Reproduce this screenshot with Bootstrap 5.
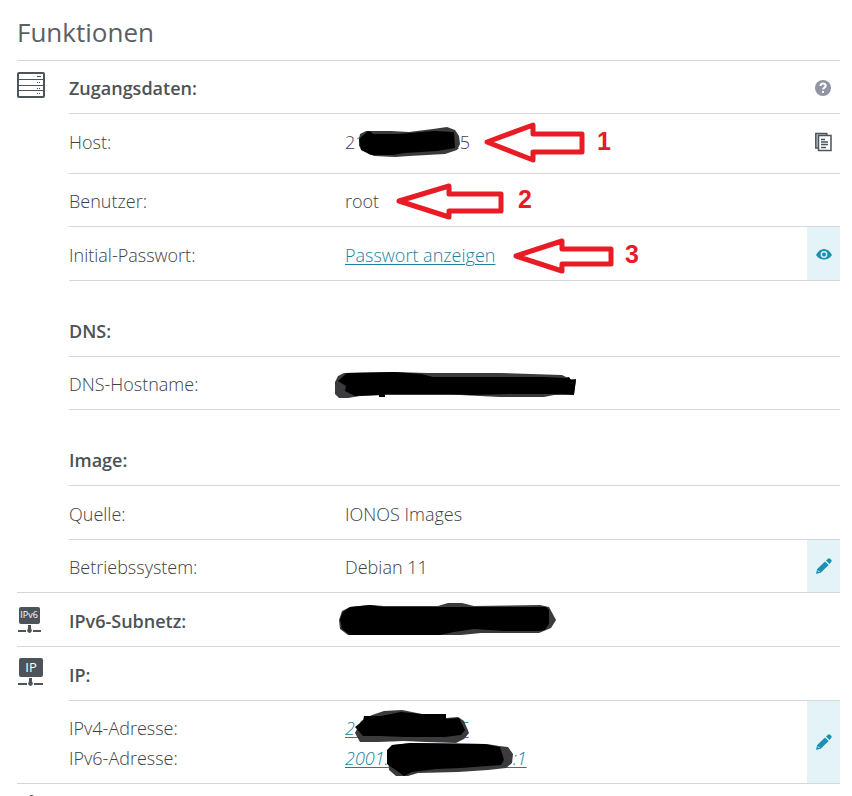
<!DOCTYPE html>
<html lang="de">
<head>
<meta charset="utf-8">
<meta name="viewport" content="width=device-width, initial-scale=1">
<title>Funktionen</title>
<link href="https://cdn.jsdelivr.net/npm/bootstrap@5.3.0/dist/css/bootstrap.min.css" rel="stylesheet">
<style>
body{font-family:"Open Sans","Noto Sans",sans-serif;font-size:18px;font-weight:320;line-height:30px;color:#3c4246;background:#fff}
.page{padding:0 12px 0 17px}
.page-title{font-size:26px;line-height:36px;padding:14px 0 10px;margin:0;font-weight:400;color:#5a6064}
.feature,.line{border-top:1px solid #d5d8da}
.side{width:52px;flex:none;padding-top:10px}
.side svg,.tool svg{display:block}
.line{min-height:53px}
.line.high{min-height:60px}
.line.mid{min-height:54px}
.line.gap-top{min-height:76px;padding-top:23px}
.line.tall{min-height:83px}
.line.first{border-top:0;min-height:52px}
.line.first.mid{min-height:53px}
.name,.val{padding-top:2px}
.name{width:276px;flex:none}
.line.high .name,.line.high .val{padding-bottom:6px}
.name.heading{font-weight:560;color:#4c5256}
.tool{width:33px;flex:none;border:0;background:transparent;padding:0;color:#1d8fb0}
.tool.tinted{background:#e4f3f8}
a{color:#1f7f9e;text-underline-offset:2px;text-decoration-thickness:1px}
.hidden-part{display:inline-block;width:84px}
.hidden-part.long{width:110px}
.ink{position:absolute;left:-15px;top:0;pointer-events:none}
.arrow{fill:#fff;stroke:#e81c24;stroke-width:5;stroke-linejoin:round}
.num{font:bold 25px "Liberation Sans",Arial,sans-serif;fill:#e81c24}
</style>
</head>
<body>
<main class="page">
<h1 class="page-title">Funktionen</h1>

<section class="feature d-flex">
  <div class="side">
    <svg width="29" height="28" viewBox="0 0 29 28" fill="none" stroke="#4c5359" aria-hidden="true"><rect x="1" y="2" width="26" height="24" rx="1" stroke-width="2"/><path d="M2 8.500h25M2 14.500h25M2 19.500h25" stroke-width="1"/><path d="M20 5.500h4M20 11.500h1M22 11.500h1M20 17.500h1M22 17.500h1M20 22.500h1M22 22.500h1" stroke-width="1"/></svg>
  </div>
  <div class="flex-grow-1">
    <div class="line first d-flex">
      <div class="name heading d-flex align-items-center">Zugangsdaten:</div><div class="flex-grow-1"></div>
      <button class="tool d-flex align-items-center justify-content-center" aria-label="Hilfe"><svg width="18" height="18" viewBox="0 0 18 18"><circle cx="8" cy="10" r="8" fill="#8f95a3"/><path d="M5.500 8c0-3.200 5.200-3.200 5.200-.3 0 1.900-2.600 1.900-2.600 3.800" fill="none" stroke="#fff" stroke-width="2"/><rect x="7" y="13" width="2" height="2" fill="#fff"/></svg></button>
    </div>
    <div class="line high d-flex">
      <div class="name d-flex align-items-center">Host:</div>
      <div class="val flex-grow-1 position-relative d-flex align-items-center"><span>21<span class="hidden-part"></span>25</span>
        <svg class="ink" width="320" height="59" viewBox="330 114 320 59"><path fill="#3b3b3d" d="M359 140l1-6 6-3h25l18 1 24-3 14-2 8 3 4 6 1 8-3 6-12 4-36 2-14 1-21-1-10-5-5-5z"/><path fill="#000" d="M359 139l9-8 3 1 2 2h25l36-3 20 1 1 16-18 3-32 2-12 2h-22l-10-5z"/><path class="arrow" d="M487 142l46-17v9h49v18h-49v8z"/><text class="num" x="597" y="150">1</text></svg>
      </div>
      <button class="tool d-flex align-items-center justify-content-center pb-1" aria-label="Kopieren"><svg width="18" height="20" viewBox="0 0 18 20" fill="none" stroke="#4c5359"><path d="M3 16H.8V1.500h11V4" fill="#b8cdd3" stroke-width="1.500"/><path d="M3.500 3.500h12.500v15h-12.500z" fill="#fff" stroke-width="1.500"/><path d="M6 7.500h4M6 10h7M6 12.500h7M6 15.500h5" stroke-width="1.400"/></svg></button>
    </div>
    <div class="line d-flex">
      <div class="name d-flex align-items-center">Benutzer:</div>
      <div class="val flex-grow-1 position-relative d-flex align-items-center">root
        <svg class="ink" width="320" height="52" viewBox="330 174 320 52"><path class="arrow" stroke-linejoin="miter" d="M399 201l50-15v8h52v17h-52v6z"/><text class="num" x="518" y="208">2</text></svg>
      </div>
    </div>
    <div class="line mid d-flex">
      <div class="name d-flex align-items-center">Initial-Passwort:</div>
      <div class="val flex-grow-1 position-relative d-flex align-items-center"><a href="#">Passwort anzeigen</a>
        <svg class="ink" width="320" height="53" viewBox="330 227 320 53"><path class="arrow" d="M516 256l46-15v8h49v15h-49v7z"/><text class="num" x="625" y="263">3</text></svg>
      </div>
      <button class="tool tinted d-flex align-items-center justify-content-center" aria-label="Passwort anzeigen"><svg width="16" height="12" viewBox="0 0 16 12"><path fill="currentColor" d="M0 7C4-1 12-1 16 7c-4 6-12 6-16 0z"/><circle cx="8" cy="6.500" r="3.400" fill="#d6eef5"/><circle cx="8" cy="6.500" r="2" fill="currentColor"/></svg></button>
    </div>
    <div class="line gap-top d-flex"><div class="name heading d-flex align-items-center">DNS:</div></div>
    <div class="line d-flex">
      <div class="name d-flex align-items-center">DNS-Hostname:</div>
      <div class="val flex-grow-1 position-relative">
        <svg class="ink" width="320" height="52" viewBox="330 357 320 52" role="img" aria-label="geschwärzt"><path fill="#3b3b3d" d="M335 382l3-6 6-3 50-1 34 1h72l62 2 8 4 6 1-2 14-20 1-10 2h-44l-40-2h-78l-22 1-12 2h-9l-4-4z"/><path fill="#000" d="M338 381l9-8 48-1 26 2 12 3h110l22 1 4-1 2 3 5-1-2 16-25-1h-37l-40 1-24-1h-63v3h-6v-2l-24 1-10-5 1-5z"/></svg>
      </div>
    </div>
    <div class="line gap-top d-flex"><div class="name heading d-flex align-items-center">Image:</div></div>
    <div class="line mid d-flex">
      <div class="name d-flex align-items-center">Quelle:</div><div class="val d-flex align-items-center">IONOS Images</div>
    </div>
    <div class="line d-flex">
      <div class="name d-flex align-items-center">Betriebssystem:</div><div class="val flex-grow-1 d-flex align-items-center">Debian 11</div>
      <button class="tool tinted d-flex align-items-center justify-content-center" aria-label="Bearbeiten"><svg width="16" height="16" viewBox="0 0 16 16"><path fill="currentColor" d="M0 16l1.200-5L9 3.500 12.700 7 5 14.500zM10 2.600L12 .8q1-1 2.200 0l1 1q1 1 0 2.200l-1.700 2z"/><path d="M2 12.500l1.600 1.600" stroke="#e4f3f8"/></svg></button>
    </div>
  </div>
</section>

<section class="feature d-flex">
  <div class="side">
    <svg width="29" height="32" viewBox="0 0 29 32" fill="#4c5359" aria-hidden="true"><rect x="2" y="4" width="21" height="17" rx="2"/><text x="12" y="15" text-anchor="middle" font-size="9" font-weight="400" fill="#fff">IPv6</text><path d="M1 27h8v2H1zM16 27h8v2h-8zM11 22h3v3l1 3-2 2h-1l-2-2 1-3z"/></svg>
  </div>
  <div class="line first mid flex-grow-1 d-flex">
    <div class="name heading d-flex align-items-center">IPv6-Subnetz:</div>
    <div class="val flex-grow-1 position-relative">
      <svg class="ink" width="320" height="53" viewBox="330 593 320 53" role="img" aria-label="geschwärzt"><path fill="#3b3b3d" d="M339 620l3-9 8-4 20-2 14 1h54l10-3h14l12 3 66-1 9 2 7 13-5 8-12 5h-58l-20 2H348l-8-6z"/><path fill="#000" d="M340 619l3-7 7-5 20-2 14 2h162l3 3v14l-4 6-6 1h-35l-30-2-20 3-14 3h-90l-8-6z"/></svg>
    </div>
  </div>
</section>

<section class="feature d-flex">
  <div class="side">
    <svg width="29" height="32" viewBox="0 0 29 32" fill="#4c5359" aria-hidden="true"><rect x="2" y="1" width="24" height="19" rx="2"/><text x="14" y="15" text-anchor="middle" font-size="13" font-weight="400" fill="#fff">IP</text><path d="M1 26h9v2H1zM17 26h9v2h-9zM12 21h3v3l1 3-2 2h-1l-2-2 1-3z"/></svg>
  </div>
  <div class="flex-grow-1">
    <div class="line first mid d-flex"><div class="name heading d-flex align-items-center">IP:</div></div>
    <div class="line tall d-flex">
      <div class="name d-flex flex-column justify-content-center">
        <div>IPv4-Adresse:</div><div>IPv6-Adresse:</div>
      </div>
      <div class="val flex-grow-1 position-relative d-flex flex-column justify-content-center align-items-start fst-italic">
        <a href="#">21<span class="hidden-part"></span>15</a><a href="#">2001:<span class="hidden-part long"></span>0::1</a>
        <svg class="ink" width="320" height="82" viewBox="330 701 320 82"><path fill="#3b3b3d" d="M355 733l6-12 11-6 12-4 18-1 20 4 24 1v3l12-1 6 4 5 12-5 6-8 4-30-1-22-1-26 1h-18z"/><path fill="#000" d="M355 727l8-6 1-5h17l20-4 20 2h25v5l13-1 6 12-4 5-16 2h-40l-25-1h-17z"/><path fill="#3b3b3d" d="M387 751l6-6 20-2 74 1 12 2 9 1 5 7-1 9-6 5-18 2-30 2-40 1-10 3h-12l-7-6z"/><path fill="#000" d="M387 750l5-5 18-2 74 1 16 3 4 13-3 5-40 3-25 1-24 3-8 4-17-12z"/></svg>
      </div>
      <button class="tool tinted d-flex align-items-center justify-content-center" aria-label="Adressen bearbeiten"><svg width="16" height="16" viewBox="0 0 16 16"><path fill="currentColor" d="M0 16l1.200-5L9 3.500 12.700 7 5 14.500zM10 2.600L12 .8q1-1 2.200 0l1 1q1 1 0 2.200l-1.700 2z"/><path d="M2 12.500l1.600 1.600" stroke="#e4f3f8"/></svg></button>
    </div>
  </div>
</section>

<section class="feature d-flex">
  <div class="side"><svg width="29" height="2" viewBox="0 0 29 2" aria-hidden="true"><path fill="#4c5359" d="M12 2l2-1h1l2 1z"/></svg></div>
</section>
</main>
<script src="https://cdn.jsdelivr.net/npm/bootstrap@5.3.0/dist/js/bootstrap.bundle.min.js"></script>
</body>
</html>
